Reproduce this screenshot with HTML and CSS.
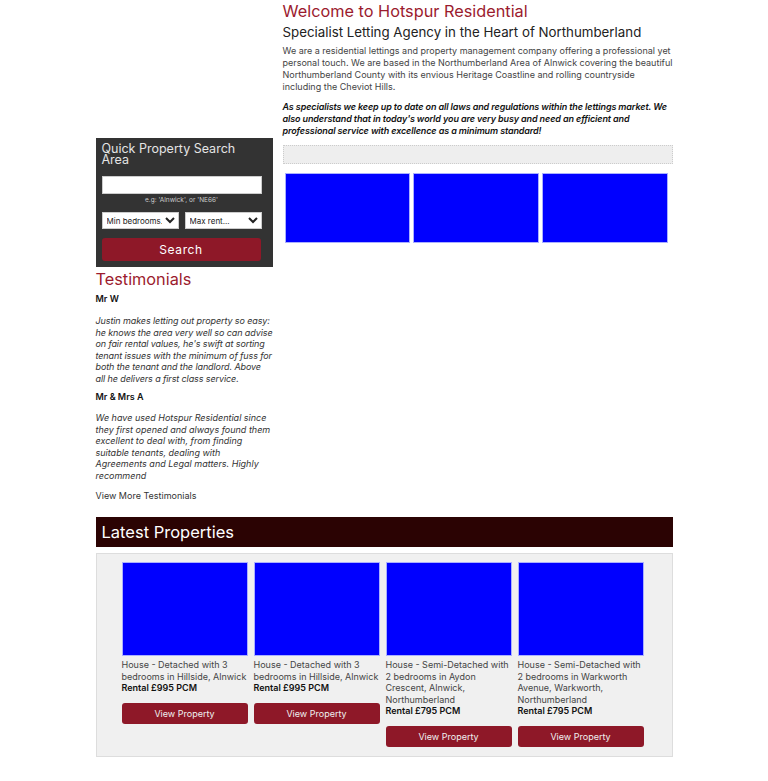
FILE: index.html
```html
<!DOCTYPE html>
<html lang="en">
<head>
<meta charset="utf-8">
<title>Hotspur Residential</title>
<link rel="stylesheet" href="styles.css">
</head>
<body>
<div class="page">
  <div class="columns">
    <aside class="sidebar">
      <div class="search">
        <h3 class="search-title">Quick Property Search Area</h3>
        <input class="search-input" type="text">
        <div class="hint">e.g: 'Alnwick', or 'NE66'</div>
        <div class="selects">
          <select class="sel"><option>Min bedrooms.</option></select>
          <select class="sel"><option>Max rent...</option></select>
        </div>
        <button class="search-btn">Search</button>
      </div>
      <h2 class="testi-title">Testimonials</h2>
      <div class="testi">
        <p class="who">Mr W</p>
        <p class="quote quote-tight">Justin makes letting out property so easy: he knows the area very well so can advise on fair rental values, he's swift at sorting tenant issues with the minimum of fuss for both the tenant and the landlord. Above all he delivers a first class service.</p>
        <p class="who">Mr &amp; Mrs A</p>
        <p class="quote">We have used Hotspur Residential since they first opened and always found them excellent to deal with, from finding suitable tenants, dealing with Agreements and Legal matters. Highly recommend</p>
        <p class="more">View More Testimonials</p>
      </div>
    </aside>
    <main class="main">
      <h1 class="title">Welcome to Hotspur Residential</h1>
      <h2 class="subtitle">Specialist Letting Agency in the Heart of Northumberland</h2>
      <p class="intro">We are a residential lettings and property management company offering a professional yet personal touch. We are based in the Northumberland Area of Alnwick covering the beautiful Northumberland County with its envious Heritage Coastline and rolling countryside including the Cheviot Hills.</p>
      <p class="intro em">As specialists we keep up to date on all laws and regulations within the lettings market. We also understand that in today's world you are very busy and need an efficient and professional service with excellence as a minimum standard!</p>
      <div class="dotted"></div>
      <div class="gallery">
        <div class="pic"></div>
        <div class="pic"></div>
        <div class="pic"></div>
      </div>
    </main>
  </div>
  <h2 class="latest-head">Latest Properties</h2>
  <div class="latest">
    <div class="card">
      <div class="card-img"></div>
      <p class="card-desc">House - Detached with 3 bedrooms in Hillside, Alnwick</p>
      <p class="card-price">Rental £995 PCM</p>
      <button class="card-btn">View Property</button>
    </div>
    <div class="card">
      <div class="card-img"></div>
      <p class="card-desc">House - Detached with 3 bedrooms in Hillside, Alnwick</p>
      <p class="card-price">Rental £995 PCM</p>
      <button class="card-btn">View Property</button>
    </div>
    <div class="card">
      <div class="card-img"></div>
      <p class="card-desc">House - Semi-Detached with 2 bedrooms in Aydon Crescent, Alnwick, Northumberland</p>
      <p class="card-price">Rental £795 PCM</p>
      <button class="card-btn">View Property</button>
    </div>
    <div class="card">
      <div class="card-img"></div>
      <p class="card-desc">House - Semi-Detached with 2 bedrooms in Warkworth Avenue, Warkworth, Northumberland</p>
      <p class="card-price">Rental £795 PCM</p>
      <button class="card-btn">View Property</button>
    </div>
  </div>
</div>
</body>
</html>
```
FILE: styles.css
```css
* { box-sizing: border-box; }
html, body { margin: 0; padding: 0; background: #fff; }
body {
  font-family: Inter, "Open Sans", sans-serif;
  color: #333;
}
.page {
  width: 577px;
  margin: 0 auto;
}
.columns {
  display: flex;
  gap: 10px;
  align-items: flex-start;
}
.sidebar {
  width: 177px;
  flex: none;
  margin-top: 138px;
}
.main {
  flex: 1;
  min-width: 0;
}
.title {
  margin: 0;
  font-size: 16.3px;
  line-height: 23px;
  font-weight: 400;
  color: #9b1b2e;
}
.subtitle {
  margin: 0;
  font-size: 13.3px;
  line-height: 18px;
  font-weight: 400;
  color: #222;
}
.intro {
  margin: 4px 0 0;
  font-size: 9px;
  line-height: 12px;
  color: #444;
}
.intro.em {
  margin-top: 8px;
  font-style: italic;
  font-weight: 600;
  letter-spacing: -0.12px;
  color: #111;
}
.dotted {
  margin-top: 8px;
  height: 19px;
  background: #eee;
  border: 1px dotted #ccc;
}
.gallery {
  display: flex;
  gap: 3px;
  margin: 9px 5px 0 2px;
}
.pic {
  width: 126px;
  height: 70px;
  background: #00f;
  border: 1px solid #aab0ff;
}
.search {
  background: #333;
  padding: 5px 11px 6px 6px;
}
.search-title {
  margin: 0;
  font-size: 12.5px;
  line-height: 11px;
  font-weight: 400;
  color: #e4e4e4;
}
.search-input {
  display: block;
  width: 160px;
  height: 18px;
  margin-top: 11px;
  border: 1px solid #ccc;
  background: #fff;
  padding: 0;
}
.hint {
  text-align: center;
  font-size: 6.5px;
  line-height: 12px;
  color: #ccc;
}
.selects {
  display: flex;
  gap: 6px;
  margin-top: 6px;
}
.sel {
  width: 77px;
  height: 17px;
  font-family: inherit;
  font-size: 8px;
  padding: 0;
  border: 1px solid #ccc;
  background: #fff;
  color: #222;
  border-radius: 0;
}
.search-btn {
  display: block;
  width: 159px;
  height: 23px;
  margin-top: 9px;
  border: none;
  border-radius: 3px;
  background: #8e1828;
  color: #fff;
  font-family: inherit;
  font-size: 12px;
  letter-spacing: 0.6px;
  padding: 0;
}
.testi-title {
  margin: 1px 0 0;
  font-size: 16.3px;
  line-height: 22px;
  font-weight: 400;
  color: #9b1b2e;
}
.testi p { margin: 0; font-size: 9px; color: #333; }
.testi .who {
  margin-top: 3px;
  font-weight: 600;
  color: #111;
  line-height: 12px;
}
.testi .quote {
  margin-top: 9px;
  font-style: italic;
  line-height: 11.5px;
}
.testi .quote-tight { letter-spacing: -0.1px; }
.testi .quote + .who { margin-top: 7px; }
.testi .who:first-child + .quote { margin-top: 10px; }
.testi .more { margin-top: 9px; line-height: 12px; }
.latest-head {
  margin: 15px 0 0;
  height: 30px;
  background: #2b0303;
  color: #fff;
  font-size: 16.5px;
  line-height: 30px;
  font-weight: 400;
  padding-left: 6px;
}
.latest {
  margin-top: 6px;
  background: #f0f0f0;
  border: 1px solid #ddd;
  display: flex;
  gap: 6px;
  align-items: flex-start;
  padding: 8px 25px 9px 25px;
}
.card {
  width: 126px;
  flex: none;
}
.card-img {
  height: 94px;
  background: #00f;
  border: 1px solid #aab0ff;
}
.card-desc {
  margin: 3px 0 0;
  font-size: 9px;
  line-height: 11.6px;
  color: #444;
}
.card-price {
  margin: 0;
  font-size: 9px;
  line-height: 11.6px;
  font-weight: 600;
  color: #111;
}
.card-btn {
  display: block;
  width: 126px;
  height: 21px;
  margin-top: 9px;
  border: none;
  border-radius: 3px;
  background: #8e1828;
  color: #f0f0f0;
  font-family: inherit;
  font-size: 9px;
  padding: 0;
}
```
